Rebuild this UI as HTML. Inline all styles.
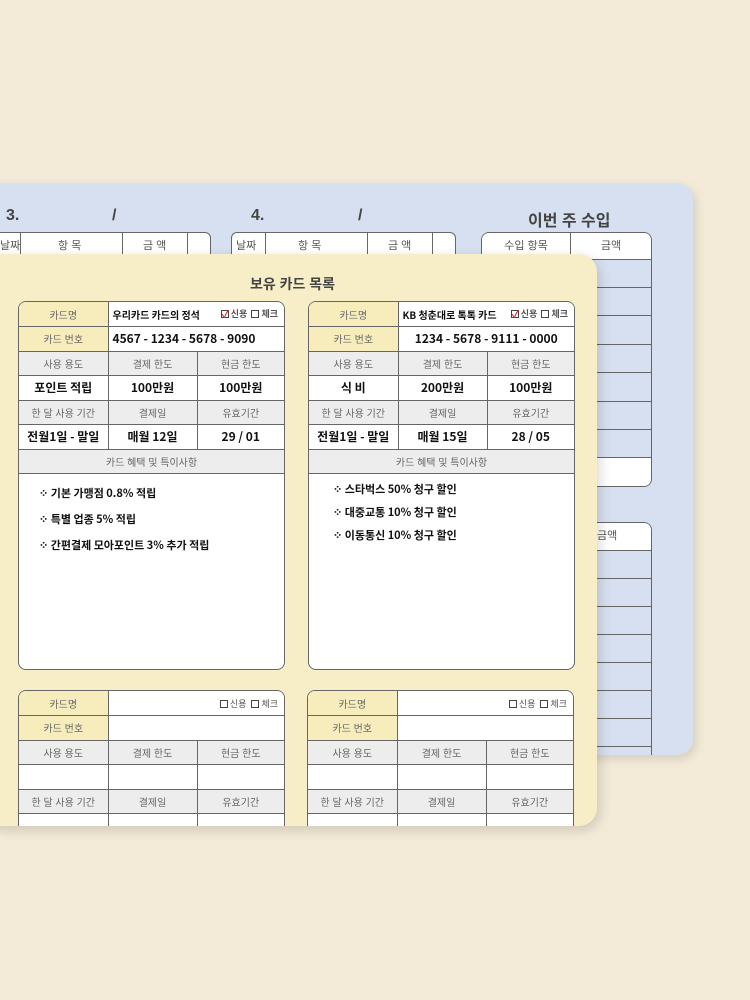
<!DOCTYPE html><html><head><meta charset="utf-8"><style>
*{margin:0;padding:0;box-sizing:border-box}
body{width:750px;height:1000px;background:#f3ead8;position:relative;overflow:hidden;font-family:"Liberation Sans","Noto Sans CJK KR",sans-serif;color:#555}
.abs{position:absolute}
.blue{left:-20px;top:183px;width:713px;height:572px;background:#d7e0f0;border-radius:16px;box-shadow:3px 4px 10px rgba(0,0,0,.12)}
.yel{left:-20px;top:254px;width:617px;height:572px;background:#f7eec7;border-radius:18px;box-shadow:3px 4px 12px rgba(0,0,0,.15)}
.h{font-weight:bold;color:#444;font-size:16px}
table{border-collapse:collapse;table-layout:fixed;position:absolute;background:#fff}
td{border:1px solid #666;text-align:center;font-size:10px;color:#666;height:24.5px;padding:0}
td.y{background:#f6ecbc}
td.g{background:#ededed}
td.hw{font-family:"Noto Sans CJK KR",sans-serif;color:#111;font-size:12px;font-weight:bold}
.card{position:absolute;border:1px solid #666;border-radius:8px;overflow:hidden;background:#fff}
.card table{position:static;width:100%}
.card tr:first-child td{border-top:0}
.card td:first-child{border-left:0}
.card td:last-child{border-right:0}
.chk{float:right;font-size:9px;color:#555;margin-right:6px}
.bx{display:inline-block;width:8px;height:8px;border:1px solid #444;vertical-align:-1px;margin-right:2px}
.note{font-family:"Noto Sans CJK KR",sans-serif;color:#111;font-size:11px;font-weight:bold;padding-left:20px;line-height:26px}
</style></head><body>
<div class="abs blue"></div>
<div class="abs h" style="left:6px;top:207px">3.</div>
<div class="abs h" style="left:112px;top:207px">/</div>
<div class="abs h" style="left:251px;top:207px">4.</div>
<div class="abs h" style="left:358px;top:207px">/</div>
<div class="abs h" style="left:528px;top:207px">이번 주 수입</div>
<div class="abs" style="left:-10px;top:232px;width:221px;height:40px;background:#fff;border:1px solid #666;border-radius:6px"></div>
<div class="abs" style="left:231px;top:232px;width:225px;height:40px;background:#fff;border:1px solid #666;border-radius:6px"></div>
<div class="abs" style="left:20px;top:232px;width:1px;height:24px;background:#666"></div>
<div class="abs" style="left:122px;top:232px;width:1px;height:24px;background:#666"></div>
<div class="abs" style="left:187px;top:232px;width:1px;height:24px;background:#666"></div>
<div class="abs" style="left:265px;top:232px;width:1px;height:24px;background:#666"></div>
<div class="abs" style="left:367px;top:232px;width:1px;height:24px;background:#666"></div>
<div class="abs" style="left:432px;top:232px;width:1px;height:24px;background:#666"></div>
<div class="abs" style="left:0;top:237px;font-size:11px;color:#555">날짜</div>
<div class="abs" style="left:58px;top:237px;font-size:11px;color:#555">항 목</div>
<div class="abs" style="left:143px;top:237px;font-size:11px;color:#555">금 액</div>
<div class="abs" style="left:236px;top:237px;font-size:11px;color:#555">날짜</div>
<div class="abs" style="left:298px;top:237px;font-size:11px;color:#555">항 목</div>
<div class="abs" style="left:388px;top:237px;font-size:11px;color:#555">금 액</div>
<div class="abs" style="left:481px;top:232px;width:171px;height:255px;border:1px solid #666;border-radius:8px;overflow:hidden;background:#d7e0f0">
<div style="height:27px;background:#fff;border-bottom:1px solid #666;display:flex;font-size:11px;color:#555;line-height:26px"><div style="width:89px;border-right:1px solid #666;text-align:center">수입 항목</div><div style="flex:1;text-align:center">금액</div></div>
<div style="height:28px;border-bottom:1px solid #666"></div><div style="height:28px;border-bottom:1px solid #666"></div><div style="height:29px;border-bottom:1px solid #666"></div><div style="height:28px;border-bottom:1px solid #666"></div><div style="height:29px;border-bottom:1px solid #666"></div><div style="height:28px;border-bottom:1px solid #666"></div><div style="height:28px;border-bottom:1px solid #666"></div><div style="height:29px;background:#fff"></div>
</div>
<div class="abs" style="left:481px;top:522px;width:171px;height:233px;border:1px solid #666;border-bottom:0;border-radius:8px 8px 0 0;overflow:hidden;background:#d7e0f0">
<div style="height:28px;background:#fff;border-bottom:1px solid #666;font-size:11px;line-height:27px;padding-left:115px">금액</div>
<div style="height:28px;border-bottom:1px solid #666"></div><div style="height:28px;border-bottom:1px solid #666"></div><div style="height:28px;border-bottom:1px solid #666"></div><div style="height:28px;border-bottom:1px solid #666"></div><div style="height:28px;border-bottom:1px solid #666"></div><div style="height:28px;border-bottom:1px solid #666"></div><div style="height:28px;border-bottom:1px solid #666"></div>
</div>

<div class="abs yel"></div>
<div class="abs h" style="left:250px;top:274px;font-size:14px">보유 카드 목록</div>

<div class="card" style="left:18px;top:301px;width:267px;height:369px">
<table><colgroup><col style="width:89px"><col style="width:89px"><col></colgroup>
<tr><td class="y">카드명</td><td colspan="2" class="hw" style="text-align:left;padding-left:4px;font-size:10px">우리카드 카드의 정석<span class="chk"><span class="bx" style="color:#d22;font-size:10px;line-height:6px">✓</span>신용 &nbsp;<span class="bx"></span>체크</span></td></tr>
<tr><td class="y">카드 번호</td><td colspan="2" class="hw" style="text-align:left;padding-left:4px">4567 - 1234 - 5678 - 9090</td></tr>
<tr><td class="g">사용 용도</td><td class="g">결제 한도</td><td class="g">현금 한도</td></tr>
<tr><td class="hw">포인트 적립</td><td class="hw">100만원</td><td class="hw">100만원</td></tr>
<tr><td class="g">한 달 사용 기간</td><td class="g">결제일</td><td class="g">유효기간</td></tr>
<tr><td class="hw">전월1일 - 말일</td><td class="hw">매월 12일</td><td class="hw">29 / 01</td></tr>
<tr><td class="g" colspan="3">카드 혜택 및 특이사항</td></tr>
</table>
<div class="note" style="padding-top:6px">⁘ 기본 가맹점 0.8% 적립<br>⁘ 특별 업종 5% 적립<br>⁘ 간편결제 모아포인트 3% 추가 적립</div>
</div>

<div class="card" style="left:308px;top:301px;width:267px;height:369px">
<table><colgroup><col style="width:89px"><col style="width:89px"><col></colgroup>
<tr><td class="y">카드명</td><td colspan="2" class="hw" style="text-align:left;padding-left:4px;font-size:10px">KB 청춘대로 톡톡 카드<span class="chk"><span class="bx" style="color:#d22;font-size:10px;line-height:6px">✓</span>신용 &nbsp;<span class="bx"></span>체크</span></td></tr>
<tr><td class="y">카드 번호</td><td colspan="2" class="hw">1234 - 5678 - 9111 - 0000</td></tr>
<tr><td class="g">사용 용도</td><td class="g">결제 한도</td><td class="g">현금 한도</td></tr>
<tr><td class="hw">식 비</td><td class="hw">200만원</td><td class="hw">100만원</td></tr>
<tr><td class="g">한 달 사용 기간</td><td class="g">결제일</td><td class="g">유효기간</td></tr>
<tr><td class="hw">전월1일 - 말일</td><td class="hw">매월 15일</td><td class="hw">28 / 05</td></tr>
<tr><td class="g" colspan="3">카드 혜택 및 특이사항</td></tr>
</table>
<div class="note" style="padding-top:4px;padding-left:24px;line-height:23px">⁘ 스타벅스 50% 청구 할인<br>⁘ 대중교통 10% 청구 할인<br>⁘ 이동통신 10% 청구 할인</div>
</div>

<div class="abs" style="left:0;top:680px;width:597px;height:146px;overflow:hidden;border-radius:0 0 18px 0">
<div class="card" style="left:18px;top:10px;width:267px;height:170px">
<table><colgroup><col style="width:89px"><col style="width:89px"><col></colgroup>
<tr><td class="y">카드명</td><td colspan="2" style="text-align:left"><span class="chk"><span class="bx"></span>신용 &nbsp;<span class="bx"></span>체크</span></td></tr>
<tr><td class="y">카드 번호</td><td colspan="2"></td></tr>
<tr><td class="g">사용 용도</td><td class="g">결제 한도</td><td class="g">현금 한도</td></tr>
<tr><td></td><td></td><td></td></tr>
<tr><td class="g">한 달 사용 기간</td><td class="g">결제일</td><td class="g">유효기간</td></tr>
<tr><td></td><td></td><td></td></tr>
</table></div>
<div class="card" style="left:307px;top:10px;width:267px;height:170px">
<table><colgroup><col style="width:89px"><col style="width:89px"><col></colgroup>
<tr><td class="y">카드명</td><td colspan="2" style="text-align:left"><span class="chk"><span class="bx"></span>신용 &nbsp;<span class="bx"></span>체크</span></td></tr>
<tr><td class="y">카드 번호</td><td colspan="2"></td></tr>
<tr><td class="g">사용 용도</td><td class="g">결제 한도</td><td class="g">현금 한도</td></tr>
<tr><td></td><td></td><td></td></tr>
<tr><td class="g">한 달 사용 기간</td><td class="g">결제일</td><td class="g">유효기간</td></tr>
<tr><td></td><td></td><td></td></tr>
</table></div>
</div>
</body></html>
